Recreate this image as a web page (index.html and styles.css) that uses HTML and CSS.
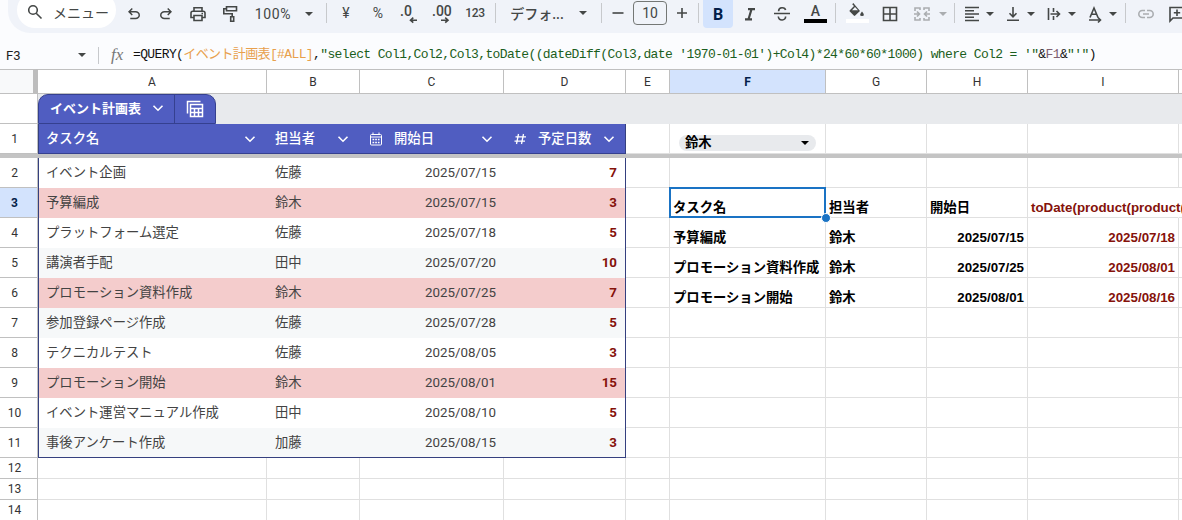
FILE: index.html
```html
<!DOCTYPE html>
<html lang="ja">
<head>
    <meta charset="UTF-8">
    <meta name="viewport" content="width=device-width, initial-scale=1.0">
    <title>イベント計画表</title>
    <link rel="stylesheet" href="styles.css">
</head>
<body>
    <svg class="defs">
        <symbol id="chevron" viewBox="0 0 12 12"><path d="M1.500 3.700 6 8.200l4.500-4.500" fill="none" stroke="currentColor" stroke-width="1.600"/></symbol>
        <symbol id="arrow" viewBox="0 0 8 4"><path d="M0 0h8L4 4z" fill="currentColor"/></symbol>
    </svg>

    <div class="toolbar">
        <div class="search">
            <svg width="16" height="16" viewBox="0 0 16 16" class="line"><circle cx="6" cy="6" r="4.300"/><path d="m9.200 9.200 5.300 5.300"/></svg>
            <span>メニュー</span>
        </div>
        <div class="tool"><svg width="18" height="18" viewBox="0 0 24 24"><path d="M7 19v-2h7.100q1.575 0 2.738-1T18 13.500T16.838 11T14.100 10H7.800l2.600 2.600L9 14L4 9l5-5l1.400 1.400L7.800 8h6.300q2.425 0 4.163 1.575T20 13.500t-1.737 3.925T14.100 19z"/></svg></div>
        <div class="tool"><svg width="18" height="18" viewBox="0 0 24 24"><path transform="matrix(-1 0 0 1 24 0)" d="M7 19v-2h7.100q1.575 0 2.738-1T18 13.500T16.838 11T14.100 10H7.800l2.600 2.600L9 14L4 9l5-5l1.400 1.400L7.800 8h6.300q2.425 0 4.163 1.575T20 13.500t-1.737 3.925T14.100 19z"/></svg></div>
        <div class="tool"><svg width="16" height="16" viewBox="0 0 16 16" class="line"><path d="M4 4.500V1.700h8v2.800M4 11.500H1V7q0-1.800 1.800-1.800h10.400Q15 5.200 15 7v4.500h-3M4 9.500h8v5H4z"/><path d="M11.500 7.500h1.500"/></svg></div>
        <div class="tool paint"><svg width="16" height="18" viewBox="0 0 16 18" class="line"><path d="M4.500 1.800h10v4h-10zM4.500 3.800H1.800v5h8.400v3M8.700 11.800h3v4.400h-3z"/></svg></div>
        <div class="tool zoom"><span>100%</span><svg class="arrow"><use href="#arrow"/></svg></div>
        <div class="sep"></div>
        <div class="tool yen">¥</div>
        <div class="tool">%</div>
        <div class="tool decimal"><svg width="20" height="20" viewBox="0 0 20 20"><text x="0" y="12">.0</text><path d="M17 16.200h-6m2.300-2.500L10.500 16.200l2.800 2.500" class="stroke"/></svg></div>
        <div class="tool decimal"><svg width="20" height="20" viewBox="0 0 20 20"><text x="0" y="12">.00</text><path d="M9 16.200h6.500m-2.300-2.500 2.800 2.500-2.800 2.500" class="stroke"/></svg></div>
        <div class="tool num">123</div>
        <div class="sep"></div>
        <div class="tool font"><span>デフォ...</span><svg class="arrow"><use href="#arrow"/></svg></div>
        <div class="sep"></div>
        <div class="tool minus"><svg width="12" height="12" viewBox="0 0 12 12" class="line"><path d="M.500 6h11"/></svg></div>
        <div class="size">10</div>
        <div class="tool plus"><svg width="12" height="12" viewBox="0 0 12 12" class="line"><path d="M1 6h10M6 1v10"/></svg></div>
        <div class="sep"></div>
        <div class="tool bold active">B</div>
        <div class="tool italic"><svg width="12" height="14" viewBox="0 0 12 14"><path d="M4 2.200h7M1 12.300h7M7.500 2.200l-3 10.100" fill="none" stroke="#444746" stroke-width="2.200"/></svg></div>
        <div class="tool strike"><svg width="16" height="16" viewBox="0 0 16 16" class="line"><path d="M0 7.500h16M4.600 5.200c0-4.600 6.400-4.300 7-1.200M4.300 10.500c.600 5 7.600 4.300 7.300 0"/></svg></div>
        <div class="tool color"><span>A</span><i class="black"></i></div>
        <div class="sep"></div>
        <div class="tool fill"><svg width="16" height="16" viewBox="0 0 16 16"><path d="M4.300 0 3.200 1.200 5 3 .800 7.200q-.700.700 0 1.400l4 4q.700.700 1.400 0L11 7.900zM6 4l3 3.200H3z" fill-rule="evenodd"/><path d="M13 8.500q3.800 4.500 0 4.500t0-4.500"/></svg><i class="white"></i></div>
        <div class="tool"><svg width="16" height="16" viewBox="0 0 16 16" class="line"><path d="M1.500 1.500h13v13h-13zM8 1.500v13M1.500 8h13"/></svg></div>
        <div class="tool merge off"><svg width="16" height="16" viewBox="0 0 16 16" class="line"><path d="M1 5V2h5v2M10 4V2h5v3M1 11v3h5v-2M10 12v2h5v-3M0 8h5M3 5.500 5.500 8 3 10.500M16 8h-5M13 5.500 10.500 8l2.500 2.500"/></svg><svg class="arrow"><use href="#arrow"/></svg></div>
        <div class="sep"></div>
        <div class="drops">
            <div class="tool drop"><svg width="16" height="16" viewBox="0 0 16 16" class="line"><path d="M1 1.500h14M1 4.800h9M1 8h14M1 11.300h9M1 14.500h14"/></svg><svg class="arrow"><use href="#arrow"/></svg></div>
            <div class="tool drop"><svg width="16" height="16" viewBox="0 0 16 16" class="line"><path d="M2 14.200h12M8 1v9.500M4.500 7.300 8 10.800l3.500-3.500"/></svg><svg class="arrow"><use href="#arrow"/></svg></div>
            <div class="tool drop"><svg width="16" height="16" viewBox="0 0 16 16" class="line"><path d="M2.500 2v12M7.500 2v4M7.500 10v4M4.500 8h8.500M10.500 5l3 3-3 3"/></svg><svg class="arrow"><use href="#arrow"/></svg></div>
            <div class="tool drop"><svg width="16" height="16" viewBox="0 0 16 16" class="line"><path d="M3 11.500 7 2l4 9.500M4.500 8.200h5M2 14h11M11 11.500l2.500 2.500-2.500 2.500"/></svg><svg class="arrow"><use href="#arrow"/></svg></div>
        </div>
        <div class="sep"></div>
        <div class="tool link off"><svg width="16" height="16" viewBox="0 0 16 16" class="line"><path d="M7 4.500H4.300a3.500 3.500 0 0 0 0 7H7M9 4.500h2.700a3.500 3.500 0 0 1 0 7H9M5 8h6"/></svg></div>
        <div class="tool comment"><svg width="16" height="16" viewBox="0 0 16 16" class="line"><path d="M1 15V1.500h14v10.500H4zM8 3.500v6.500M4.800 6.800h6.400"/></svg></div>
    </div>

    <div class="formula-bar">
        <div class="name-box"><span>F3</span><svg class="arrow"><use href="#arrow"/></svg></div>
        <div class="sep"></div>
        <span class="fx">fx</span>
        <div class="formula">=QUERY(<span class="range">イベント計画表[#ALL]</span>,<span class="str">"select Col1,Col2,Col3,toDate((dateDiff(Col3,date '1970-01-01')+Col4)*24*60*60*1000) where Col2 = '"</span>&amp;<span class="ref">F1</span>&amp;<span class="str">"'"</span>)</div>
    </div>

    <table class="sheet">
        <colgroup>
            <col class="c-head"><col class="c-a"><col class="c-b"><col class="c-c"><col class="c-d"><col class="c-e"><col class="c-f"><col class="c-g"><col class="c-h"><col class="c-i"><col class="c-j">
        </colgroup>
        <tr class="letters">
            <th class="corner"></th><th>A</th><th>B</th><th>C</th><th>D</th><th>E</th><th class="selected">F</th><th>G</th><th>H</th><th>I</th><th></th>
        </tr>
        <tr class="group">
            <th></th>
            <td colspan="10">
                <div class="tab">
                    <div class="tab-name">イベント計画表<svg class="chev"><use href="#chevron"/></svg></div>
                    <div class="tab-icon">
                        <svg width="18" height="18" viewBox="0 0 18 18"><path d="M1.500 13.500v-12h13M4.500 4.500h12v12h-12zM4.500 8.500h12M4.500 12.500h12M8.500 8.500v8M12.500 8.500v8" fill="none" stroke="#fff" stroke-width="1.500"/></svg>
                    </div>
                </div>
            </td>
        </tr>
        <tr class="titles">
            <th>1</th>
            <td class="t first"><div class="title"><span>タスク名</span><svg class="chev"><use href="#chevron"/></svg></div></td>
            <td class="t"><div class="title"><span>担当者</span><svg class="chev"><use href="#chevron"/></svg></div></td>
            <td class="t"><div class="title typed">
                <svg width="14" height="14" viewBox="0 0 14 14" fill="none" stroke="#fff"><rect x="1.500" y="2.500" width="11" height="10.500" rx="1" fill="none"/><path d="M4 .500v2M10 .500v2M1.500 5h11"/><path d="M3.500 7.500h7M3.500 10.500h7" stroke-width="1.500" stroke-dasharray="1.700 1"/></svg>
                <span>開始日</span><svg class="chev"><use href="#chevron"/></svg></div></td>
            <td class="t last"><div class="title typed">
                <svg width="14" height="14" viewBox="0 0 14 14" fill="none" stroke="#fff" stroke-width="1.300"><path d="M5.500 2 3.500 12M10.500 2l-2 10M2.500 4.800h10.500M1.500 9.200H12"/></svg>
                <span>予定日数</span><svg class="chev"><use href="#chevron"/></svg></div></td>
            <td></td>
            <td><div class="chip"><span>鈴木</span><svg class="arrow"><use href="#arrow"/></svg></div></td>
            <td></td><td></td><td></td><td></td>
        </tr>
        <tr class="freeze"><td colspan="11"></td></tr>
        <tr><th>2</th><td class="t first">イベント企画</td><td class="t">佐藤</td><td class="t date">2025/07/15</td><td class="t last">7</td><td></td><td></td><td></td><td></td><td></td><td></td></tr>
        <tr class="hit"><th class="selected">3</th><td class="t first">予算編成</td><td class="t">鈴木</td><td class="t date">2025/07/15</td><td class="t last">3</td><td></td><td class="cursor">タスク名</td><td>担当者</td><td>開始日</td><td class="red spill">toDate(product(product(</td><td></td></tr>
        <tr><th>4</th><td class="t first">プラットフォーム選定</td><td class="t">佐藤</td><td class="t date">2025/07/18</td><td class="t last">5</td><td></td><td>予算編成</td><td>鈴木</td><td class="right">2025/07/15</td><td class="right red">2025/07/18</td><td></td></tr>
        <tr class="even"><th>5</th><td class="t first">講演者手配</td><td class="t">田中</td><td class="t date">2025/07/20</td><td class="t last">10</td><td></td><td>プロモーション資料作成</td><td>鈴木</td><td class="right">2025/07/25</td><td class="right red">2025/08/01</td><td></td></tr>
        <tr class="hit"><th>6</th><td class="t first">プロモーション資料作成</td><td class="t">鈴木</td><td class="t date">2025/07/25</td><td class="t last">7</td><td></td><td>プロモーション開始</td><td>鈴木</td><td class="right">2025/08/01</td><td class="right red">2025/08/16</td><td></td></tr>
        <tr class="even"><th>7</th><td class="t first">参加登録ページ作成</td><td class="t">佐藤</td><td class="t date">2025/07/28</td><td class="t last">5</td><td></td><td></td><td></td><td></td><td></td><td></td></tr>
        <tr><th>8</th><td class="t first">テクニカルテスト</td><td class="t">佐藤</td><td class="t date">2025/08/05</td><td class="t last">3</td><td></td><td></td><td></td><td></td><td></td><td></td></tr>
        <tr class="hit"><th>9</th><td class="t first">プロモーション開始</td><td class="t">鈴木</td><td class="t date">2025/08/01</td><td class="t last">15</td><td></td><td></td><td></td><td></td><td></td><td></td></tr>
        <tr><th>10</th><td class="t first">イベント運営マニュアル作成</td><td class="t">田中</td><td class="t date">2025/08/10</td><td class="t last">5</td><td></td><td></td><td></td><td></td><td></td><td></td></tr>
        <tr class="even end"><th>11</th><td class="t first">事後アンケート作成</td><td class="t">加藤</td><td class="t date">2025/08/15</td><td class="t last">3</td><td></td><td></td><td></td><td></td><td></td><td></td></tr>
        <tr class="short"><th>12</th><td></td><td></td><td></td><td></td><td></td><td></td><td></td><td></td><td></td><td></td></tr>
        <tr class="short"><th>13</th><td></td><td></td><td></td><td></td><td></td><td></td><td></td><td></td><td></td><td></td></tr>
        <tr class="short"><th>14</th><td></td><td></td><td></td><td></td><td></td><td></td><td></td><td></td><td></td><td></td></tr>
    </table>
</body>
</html>
```

FILE: styles.css
```css
body {
    margin: 0;
    width: 1182px;
    height: 520px;
    overflow: hidden;
    background-color: #fbfcfe;
    font-family: Roboto, "Noto Sans CJK JP", sans-serif;
    color: #444746;
}
.defs {
    display: none;
}
svg {
    display: block;
    flex: none;
    overflow: visible;
    fill: #444746;
}
.line,
.stroke {
    fill: none;
    stroke: #444746;
    stroke-width: 1.6;
}
.arrow {
    width: 8px;
    height: 4px;
    color: #444746;
}
.chev {
    width: 12px;
    height: 12px;
    color: #fff;
}

/* toolbar */
.toolbar {
    display: flex;
    align-items: center;
    box-sizing: border-box;
    height: 33px;
    margin-left: 8px;
    padding: 0 0 5px 9px;
    background-color: #f0f3f9;
    border-radius: 0 0 0 22px;
    font-size: 14px;
    font-weight: 500;
    overflow: hidden;
}
.toolbar > div {
    flex: none;
    box-sizing: border-box;
}
.search {
    display: flex;
    align-items: center;
    gap: 10px;
    width: 99px;
    height: 36px;
    margin: -9px 2px 0 0;
    padding: 5px 0 0 10px;
    background-color: #fff;
    border-radius: 18px;
    font-weight: 400;
}
.tool {
    display: flex;
    align-items: center;
    justify-content: center;
    box-sizing: border-box;
    width: 32px;
    height: 28px;
}
.sep {
    width: 1px;
    height: 20px;
    margin-top: -2px;
    background-color: #c7c9cc;
}
.paint {
    width: 31px;
}
.zoom {
    width: 81px;
    padding-right: 3px;
    gap: 14px;
    letter-spacing: 0.6px;
    font-weight: 400;
}
.yen {
    margin-left: 3px;
}
.yen,
.yen + .tool,
.num {
    padding-bottom: 3px;
    font-size: 14px;
    font-weight: 400;
}
.decimal text {
    font-size: 14px;
    font-weight: 500;
}
.toolbar .num {
    width: 34px;
    margin-right: 3px;
    font-size: 12px;
    font-weight: 500;
    letter-spacing: -0.3px;
}
.font {
    width: 105px;
    gap: 15px;
    font-weight: 500;
    padding-bottom: 2px;
}
.minus {
    width: 31px;
}
.minus,
.plus {
    padding-bottom: 2px;
}
.size {
    width: 34px;
    height: 24px;
    border: 1px solid #747775;
    border-radius: 4px;
    margin-top: -3px;
    line-height: 23px;
    text-align: center;
    font-weight: 400;
}
.plus {
    width: 31px;
    padding-right: 2px;
}
.bold {
    width: 30px;
    margin: 0 1px 0 4px;
    font-size: 16px;
    font-weight: 700;
    color: #041e49;
}
.active {
    background-color: #d3e3fd;
    border-radius: 0 0 4px 4px;
}
.color,
.fill {
    flex-direction: column;
    justify-content: flex-end;
    padding-bottom: 5px;
    font-size: 14px;
    line-height: 15px;
}
.color {
    width: 37px;
    padding-right: 2px;
}
.color i,
.fill i {
    width: 23px;
    height: 4px;
}
.black {
    background-color: #000;
}
.white {
    background-color: #fff;
}
.fill {
    width: 38px;
    padding-left: 4px;
}
.merge {
    width: 48px;
    gap: 9px;
}
.drops {
    display: flex;
    padding: 0 3px;
}
.drop {
    width: 41px;
    gap: 6px;
}
.off {
    opacity: 0.4;
}
.link {
    width: 40px;
}
.comment {
    margin-left: -5px;
}

/* formula bar */
.formula-bar {
    display: flex;
    align-items: center;
    height: 36px;
    font-size: 13px;
}
.name-box {
    display: flex;
    align-items: center;
    justify-content: space-between;
    width: 80px;
    margin-right: 12px;
    padding-left: 6px;
    color: #1f1f1f;
}
.formula-bar .sep {
    height: 17px;
    margin: 8px 0 0;
}
.name-box,
.formula {
    margin-top: 8px;
}
.fx {
    width: 22px;
    margin: 8px 0 0 12px;
    font-family: "Liberation Serif", serif;
    font-style: italic;
    font-size: 17px;
    color: #777;
}
.formula {
    font-family: "Liberation Mono", "Noto Sans CJK JP", monospace;
    font-size: 13px;
    letter-spacing: -0.62px;
    line-height: 18px;
    white-space: pre;
    color: #111;
}
.range {
    color: #e8a04c;
}
.str {
    color: #1b5e20;
}
.ref {
    color: #806070;
}

/* grid */
.sheet {
    width: 1190px;
    table-layout: fixed;
    border-collapse: separate;
    border-spacing: 0;
    font-size: 13.333px;
}
.c-head { width: 38px; }
.c-a { width: 229px; }
.c-b { width: 93px; }
.c-c { width: 144px; }
.c-d { width: 122px; }
.c-e { width: 44px; }
.c-f { width: 156px; }
.c-g { width: 101px; }
.c-h { width: 101px; }
.c-i { width: 151px; }
.c-j { width: 11px; }
.sheet th,
.sheet td {
    box-sizing: border-box;
    height: 30px;
    padding: 0 3px;
    border-right: 1px solid #e0e0e0;
    border-bottom: 1px solid #e0e0e0;
    background-color: #fff;
    line-height: 18px;
    white-space: nowrap;
    vertical-align: bottom;
    text-align: left;
    font-family: "Liberation Sans", "Noto Sans CJK JP", sans-serif;
    font-weight: 700;
    color: #000;
}
.sheet th {
    padding: 0 8px 0 0;
    border-color: #c0c0c0;
    vertical-align: middle;
    text-align: center;
    font-family: Roboto, sans-serif;
    font-size: 12px;
    font-weight: 400;
    color: #333;
}
.sheet .letters th {
    height: 25px;
    padding: 0;
    border-top: 1px solid #c0c0c0;
}
.sheet .letters .corner {
    border-right: 5px solid #bdbdbd;
    background-color: #f8f9fa;
}
.sheet th.selected,
.sheet .letters th.selected {
    background-color: #d3e3fd;
    font-weight: 700;
    color: #041e49;
}
.sheet .group td {
    padding: 0;
    border: 0;
    background-color: #e8eaed;
    vertical-align: top;
}
.sheet .group th {
    border-bottom-color: #c0c0c0;
}
.tab {
    display: flex;
    box-sizing: border-box;
    width: 178px;
    height: 30px;
    background-color: #505dc1;
    border: 1px solid #35408f;
    border-radius: 10px 10px 0 0;
    font-family: "Noto Sans CJK JP", sans-serif;
    font-size: 13px;
    color: #fff;
}
.tab-name {
    display: flex;
    align-items: center;
    gap: 11px;
    width: 124px;
    padding: 0 0 2px 11px;
    border-right: 1px solid #35408f;
}
.tab-icon {
    display: flex;
    align-items: center;
    justify-content: center;
    flex: 1;
}
.titles .chip {
    display: flex;
    align-items: center;
    justify-content: space-between;
    height: 16px;
    margin: 0 6px 2px;
    padding: 0 7px 0 6px;
    border-radius: 8px;
    background-color: #e8eaed;
}
.chip .arrow {
    color: #000;
}
.sheet td.t {
    padding: 0 8px;
    border-right: 0;
    border-bottom: 0;
    vertical-align: middle;
    font-family: Roboto, "Noto Sans CJK JP", sans-serif;
    font-weight: 400;
    color: #434343;
}
.sheet td.first {
    padding-left: 7px;
    border-left: 1px solid #35407f;
}
.sheet td.last {
    border-right: 1px solid #35407f;
    text-align: right;
    font-weight: 700;
    color: #85120a;
}
.sheet td.date {
    text-align: right;
}
.sheet .titles td.t {
    background-color: #505dc1;
    border-bottom: 1px solid #35408f;
    font-weight: 500;
    color: #fff;
}
.title {
    display: flex;
    align-items: center;
    justify-content: space-between;
    padding-right: 3px;
}
.typed {
    padding-left: 1px;
}
.typed span {
    margin: 0 auto 0 11px;
}
.last .title {
    padding-right: 2px;
}
.sheet .freeze td {
    height: 4px;
    padding: 0;
    border: 0;
    background-color: #c4c4c4;
    line-height: 0;
}
.sheet .hit .t {
    background-color: #f4cccc;
}
.sheet .even .t {
    background-color: #f6f8f9;
}
.sheet .end .t {
    border-bottom: 1px solid #35407f;
}
.sheet .short th,
.sheet .short td {
    height: 21px;
}
.sheet td.right {
    text-align: right;
}
.sheet td.red {
    color: #85120a;
}
.sheet td.spill {
    border-right-color: #fff;
}
.sheet td.cursor {
    position: relative;
}
.cursor::before {
    content: "";
    position: absolute;
    inset: -1px;
    border: 2px solid #1a73c4;
}
.cursor::after {
    content: "";
    position: absolute;
    right: -6px;
    bottom: -6px;
    width: 8px;
    height: 8px;
    border: 1px solid #fff;
    border-radius: 50%;
    background-color: #1a73c4;
}
```
